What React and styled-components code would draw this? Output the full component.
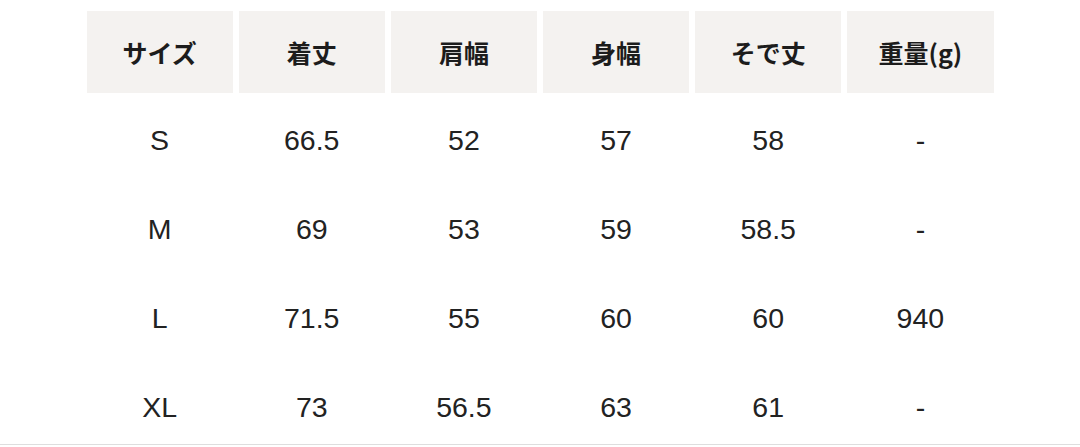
import styled, { createGlobalStyle } from 'styled-components'

const GlobalStyle = createGlobalStyle`
    body {
        margin: 0;
        background: #fff;
        font-family: "Liberation Sans", "Noto Sans CJK JP", sans-serif;
        color: #222;
    }
`

const headers = ['サイズ', '着丈', '肩幅', '身幅', 'そで丈', '重量(g)']

const rows = [
    ['S', '66.5', '52', '57', '58', '-'],
    ['M', '69', '53', '59', '58.5', '-'],
    ['L', '71.5', '55', '60', '60', '940'],
    ['XL', '73', '56.5', '63', '61', '-'],
]

function App() {
    return (
        <>
            <GlobalStyle />
            <Wrapper>
                <SizeTable>
                    <thead>
                        <tr>
                            {headers.map((h, index) => (
                                <Th key={index}>{h}</Th>
                            ))}
                        </tr>
                    </thead>
                    <tbody>
                        {rows.map((row, index) => (
                            <tr key={index}>
                                {row.map((cell, i) => (
                                    <Td key={i}>{cell}</Td>
                                ))}
                            </tr>
                        ))}
                    </tbody>
                </SizeTable>
            </Wrapper>
        </>
    )
}

const Wrapper = styled.div`
    height: 445px;
    border-bottom: 1px solid #dedede;
    overflow: hidden;
    padding-top: 5px;
    box-sizing: border-box;
`
const SizeTable = styled.table`
    margin: 0 auto;
    border-collapse: separate;
    border-spacing: 6px;
    table-layout: fixed;
    width: 919px;
`
const Th = styled.th`
    height: 82px;
    padding: 0;
    background: #f4f2f0;
    font-family: "Noto Sans CJK JP", sans-serif;
    font-weight: 700;
    font-size: 25px;
    color: #1c1c1c;
    text-align: center;
    vertical-align: middle;
`
const Td = styled.td`
    height: 83px;
    padding: 0;
    font-size: 28.5px;
    text-align: center;
    vertical-align: middle;
    color: #222;
`

export default App
